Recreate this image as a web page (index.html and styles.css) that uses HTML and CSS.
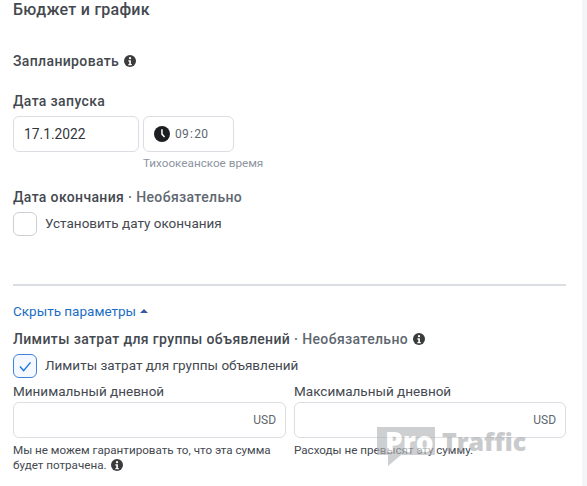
FILE: index.html
```html
<!DOCTYPE html>
<html lang="ru">
<head>
<meta charset="utf-8">
<title>Бюджет и график</title>
<link rel="stylesheet" href="styles.css">
</head>
<body>
<div class="page">
  <main class="panel">
    <h2 class="title">Бюджет и график</h2>

    <div class="heading schedule"><span>Запланировать</span>
      <svg class="info" viewBox="0 0 16 16"><circle cx="8" cy="8" r="8" fill="#3a3b3c"/><circle cx="8" cy="4.2" r="1.5" fill="#fff"/><path d="M5.8 7h3.4v5h1.2v1.6H5.8V12h1.2V8.6H5.8z" fill="#fff"/></svg>
    </div>

    <div class="heading start-label">Дата запуска</div>
    <div class="date-row">
      <div class="box date-box">17.1.2022</div>
      <div class="time-col">
        <div class="box time-box">
          <svg class="clock" viewBox="0 0 16 16"><circle cx="8" cy="8" r="8" fill="#1c1e21"/><path d="M7.2 3.2h1.5v4.6l2.4 2.6-1.1 1-2.8-3z" fill="#fff"/></svg>
          <span class="time">09<span class="colon">:</span>20</span>
        </div>
        <div class="tz">Тихоокеанское время</div>
      </div>
    </div>

    <div class="heading end-label"><span>Дата окончания <span class="optional">· Необязательно</span></span></div>
    <div class="check-row">
      <span class="check"></span>
      <span class="check-text">Установить дату окончания</span>
    </div>

    <hr class="divider">

    <div class="link"><span>Скрыть параметры</span><span class="caret"></span></div>

    <div class="heading limits"><span>Лимиты затрат для группы объявлений <span class="optional">· Необязательно</span></span>
      <svg class="info" viewBox="0 0 16 16"><circle cx="8" cy="8" r="8" fill="#3a3b3c"/><circle cx="8" cy="4.2" r="1.5" fill="#fff"/><path d="M5.8 7h3.4v5h1.2v1.6H5.8V12h1.2V8.6H5.8z" fill="#fff"/></svg>
    </div>
    <div class="check-row checked-row">
      <span class="check checked">
        <svg viewBox="0 0 24 24"><path d="M6.5 12.5l4 4.5 7.5-9" fill="none" stroke="#1b74e4" stroke-width="1.5"/></svg>
      </span>
      <span class="check-text">Лимиты затрат для группы объявлений</span>
    </div>

    <div class="fields">
      <div class="field">
        <div class="field-label">Минимальный дневной</div>
        <div class="box money"><span>USD</span></div>
        <div class="help">Мы не можем гарантировать то, что эта сумма будет потрачена.
          <svg class="info help-info" viewBox="0 0 16 16"><circle cx="8" cy="8" r="8" fill="#3a3b3c"/><circle cx="8" cy="4.2" r="1.5" fill="#fff"/><path d="M5.8 7h3.4v5h1.2v1.6H5.8V12h1.2V8.6H5.8z" fill="#fff"/></svg>
        </div>
      </div>
      <div class="field">
        <div class="field-label">Максимальный дневной</div>
        <div class="box money"><span>USD</span></div>
        <div class="help">Расходы не превысят эту сумму.</div>
      </div>
    </div>
  </main>
  <div class="strip"></div>
</div>
<div class="watermark">
  <span class="wm-pro">Pro</span><span class="wm-traffic">Traffic</span>
</div>
</body>
</html>
```
FILE: styles.css
```css
* { box-sizing: border-box; }
html, body { margin: 0; padding: 0; height: 100%; background: #fff; overflow: hidden; }
body { font-family: Roboto, "Liberation Sans", sans-serif; color: #1c1e21; position: relative; }
.page { display: flex; height: 486px; width: 587px; }
.panel { width: 582px; padding: 1px 16px 0 13px; flex: none; }
.strip { flex: 1; background: #f4f5f7; }
.title { margin: 0; font-size: 16px; line-height: 18px; font-weight: 500; color: #444950; letter-spacing: .25px; }
.heading { font-size: 14px; line-height: 16px; font-weight: 500; color: #444950; letter-spacing: .36px; display: flex; align-items: center; }
.schedule { margin-top: 34px; }
.start-label { margin-top: 24px; }
.info { width: 12px; height: 12px; margin-left: 5px; flex: none; }
.date-row { display: flex; gap: 4px; margin-top: 7px; }
.box { border: 1px solid #dadde1; border-radius: 6px; background: #fff; }
.date-box { width: 126px; height: 36px; padding-left: 10px; font-size: 13.8px; line-height: 34px; color: #333639; }
.time-box { width: 91px; height: 36px; display: flex; align-items: center; padding-left: 10px; }
.clock { width: 16px; height: 16px; flex: none; }
.time { margin-left: 5px; font-size: 12px; color: #606770; letter-spacing: .3px; }
.colon { margin: 0 1px; }
.tz { font-size: 11.7px; line-height: 14px; margin-top: 4px; color: #8d949e; }
.end-label { margin-top: 19px; }
.optional { color: #606770; }
.check-row { display: flex; align-items: center; gap: 8px; }
.end-label + .check-row { margin-top: 7px; }
.check { width: 24px; height: 24px; border: 1px solid #ccd0d5; border-radius: 6px; background: #fff; flex: none; display: block; }
.checked { border-color: #3f83dc; background: #f5f9ff; }
.checked svg { width: 22px; height: 22px; display: block; }
.check-text { font-size: 13.5px; color: #444950; line-height: 22px; margin-bottom: 2px; }
.divider { border: 0; height: 2px; background: #dadde1; margin: 48px 0 0; }
.link { margin-top: 17px; font-size: 13.5px; line-height: 16px; color: #1b6ec2; display: flex; align-items: center; }
.caret { width: 0; height: 0; border: 4px solid transparent; border-top: 0; border-bottom: 4px solid #385898; margin-left: 4px; }
.limits { margin-top: 12px; }
.checked-row { margin-top: 7px; }
.fields { display: grid; grid-template-columns: 273px 272px; gap: 8px; margin-top: 4px; }
.field-label { font-size: 13.5px; line-height: 18px; color: #444950; margin-bottom: 2px; }
.money { height: 36px; display: flex; align-items: center; justify-content: flex-end; padding-right: 9px; font-size: 12px; color: #606770; }
.help { font-size: 11.65px; line-height: 15px; color: #444950; margin-top: 5px; }
.help-info { display: inline-block; vertical-align: -2px; margin-left: 2px; }
.watermark { position: absolute; left: 377px; top: 427px; display: flex; align-items: center; font-family: "Open Sans", "Liberation Sans", sans-serif; font-weight: 800; font-size: 25px; line-height: 28px; opacity: .62; }
.wm-pro { position: relative; width: 58px; height: 28px; background: #b0b2b5; color: #fff; padding-left: 8px; font-size: 28px; }
.wm-pro::after { content: ""; position: absolute; left: 11px; top: 28px; border-top: 11px solid #b0b2b5; border-right: 13px solid transparent; }
.wm-traffic { color: #a9abae; margin-left: 7px; }
```
